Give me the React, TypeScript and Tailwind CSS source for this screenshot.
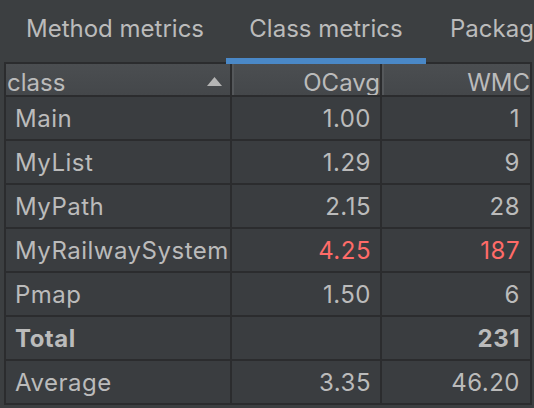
import React from "react";

type Row = { name: string; oc: string; wmc: string; red?: boolean; bold?: boolean };

const rows: Row[] = [
  { name: "Main", oc: "1.00", wmc: "1" },
  { name: "MyList", oc: "1.29", wmc: "9" },
  { name: "MyPath", oc: "2.15", wmc: "28" },
  { name: "MyRailwaySystem", oc: "4.25", wmc: "187", red: true },
  { name: "Pmap", oc: "1.50", wmc: "6" },
  { name: "Total", oc: "", wmc: "231", bold: true },
  { name: "Average", oc: "3.35", wmc: "46.20" },
];

export default function App() {
  return (
    <div
      className="w-[534px] h-[408px] overflow-hidden bg-[#3c3f41] text-[#bbbbbb] text-[24px]"
      style={{ fontFamily: "Inter, 'Noto Sans', sans-serif" }}
    >
      {/* Tabs */}
      <div className="flex h-[62px] pl-[4px] whitespace-nowrap">
        <div className="w-[222px] shrink-0 text-center leading-[57px] h-[62px]">Method metrics</div>
        <div className="relative w-[200px] shrink-0 text-center leading-[57px] h-[62px]">
          Class metrics
          <div className="absolute left-0 right-0 top-[58px] h-[6px] bg-[#4a88c7] z-10" />
        </div>
        <div className="pl-[24px] shrink-0 leading-[57px] h-[62px]">Package metrics</div>
      </div>

      {/* Table */}
      <div className="pl-[4px]">
        <div className="grid grid-cols-[224px_148px_148px] gap-[2px] p-[2px] bg-[#2b2c2e] w-[528px]">
          {/* Header */}
          <div className="h-[31px] overflow-hidden bg-gradient-to-b from-[#4b4e51] to-[#44474a] flex items-start justify-between pl-[1px]">
            <span className="leading-[38px]">class</span>
            <svg width="15" height="9" viewBox="0 0 15 9" className="mt-[13px] mr-[8px]">
              <polygon points="7.5,0 15,9 0,9" fill="#b5b5b5" />
            </svg>
          </div>
          <div className="h-[31px] overflow-hidden bg-gradient-to-b from-[#4b4e51] to-[#44474a] border-l-2 border-[#55585b] text-right">
            <span className="leading-[38px]">OCavg</span>
          </div>
          <div className="h-[31px] overflow-hidden bg-gradient-to-b from-[#4b4e51] to-[#44474a] border-l-2 border-[#55585b] text-right">
            <span className="leading-[38px]">WMC</span>
          </div>

          {rows.map((r) => (
            <React.Fragment key={r.name}>
              <div
                className={`h-[42px] leading-[43px] tracking-[0.5px] bg-[#3a3d40] pl-[9px] whitespace-nowrap overflow-hidden ${
                  r.bold ? "font-bold" : ""
                }`}
              >
                {r.name}
              </div>
              <div
                className={`h-[42px] leading-[43px] tracking-[0.5px] bg-[#3a3d40] pr-[9px] text-right ${
                  r.red ? "text-[#ff6b68]" : ""
                } ${r.bold ? "font-bold" : ""}`}
              >
                {r.oc}
              </div>
              <div
                className={`h-[42px] leading-[43px] tracking-[0.5px] bg-[#3a3d40] pr-[10px] text-right ${
                  r.red ? "text-[#ff6b68]" : ""
                } ${r.bold ? "font-bold" : ""}`}
              >
                {r.wmc}
              </div>
            </React.Fragment>
          ))}
        </div>
      </div>
    </div>
  );
}
